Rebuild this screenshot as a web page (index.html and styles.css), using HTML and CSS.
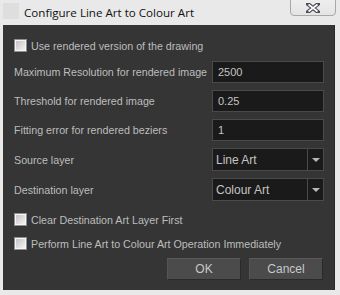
FILE: index.html
```html
<!DOCTYPE html>
<html>
<head>
  <title>Configure Line Art to Colour Art</title>
  <link rel="stylesheet" href="styles.css">
</head>
<body>

<div class="window">
  <div class="titlebar">
    <span class="app-icon"></span>
    <span class="title">Configure Line Art to Colour Art</span>
    <button type="button" class="close">
      <svg width="14" height="10" viewBox="0 0 14 10">
        <path d="M2 1 L12 9 M12 1 L2 9" stroke="#4a4a5a" stroke-width="4" stroke-linecap="square"/>
        <path d="M2.5 1.5 L11.5 8.5 M11.5 1.5 L2.5 8.5" stroke="#ffffff" stroke-width="1.6"/>
      </svg>
    </button>
  </div>

  <div class="content">
    <label class="check first"><span class="box"></span>Use rendered version of the drawing</label>

    <div class="form">
      <span class="lbl">Maximum Resolution for rendered image</span>
      <span class="field">2500</span>

      <span class="lbl">Threshold for rendered image</span>
      <span class="field">0.25</span>

      <span class="lbl">Fitting error for rendered beziers</span>
      <span class="field">1</span>

      <span class="lbl">Source layer</span>
      <span class="combo"><span class="value">Line Art</span><span class="arrow"></span></span>

      <span class="lbl">Destination layer</span>
      <span class="combo"><span class="value">Colour Art</span><span class="arrow"></span></span>
    </div>

    <label class="check clear"><span class="box"></span>Clear Destination Art Layer First</label>
    <label class="check perform"><span class="box"></span>Perform Line Art to Colour Art Operation Immediately</label>

    <div class="buttons">
      <button type="button" class="btn">OK</button>
      <button type="button" class="btn">Cancel</button>
    </div>
  </div>
</div>

</body>
</html>
```

FILE: styles.css
```css
body {
  margin: 0;
  background: #e9e9e9;
  font-family: "Liberation Sans", Arial, sans-serif;
}

.window {
  width: 340px;
  height: 295px;
  display: flex;
  flex-direction: column;
}

.titlebar {
  height: 25px;
  display: flex;
  align-items: flex-start;
  position: relative;
}

.app-icon {
  width: 16px;
  height: 16px;
  margin: 3px 0 0 3px;
  background: #dedede;
}

.title {
  margin: 5px 0 0 5px;
  font-family: "Open Sans", sans-serif;
  font-size: 11.6px;
  color: #111;
}

.close {
  position: absolute;
  left: 290px;
  top: -1px;
  width: 46px;
  height: 17px;
  padding: 0;
  border: 1px solid #a8a8a8;
  border-radius: 0 0 4px 4px;
  background: linear-gradient(#eeeeee, #e4e4e4);
  display: flex;
  align-items: center;
  justify-content: center;
}

.content {
  flex: 1;
  margin: 0 5px 5px 3px;
  background: #353535;
  border-right: 1px solid #2a2a2a;
  padding: 14px 10px 0 11px;
  color: #bdbdbd;
  font-size: 10.7px;
  white-space: nowrap;
}

.check {
  display: flex;
  align-items: center;
  height: 13px;
}

.box {
  width: 11px;
  height: 11px;
  margin-right: 4px;
  border: 1px solid #8e8e8e;
  box-shadow: inset 0 0 0 1px #f6f6f6;
  background: linear-gradient(135deg, #bdbdbd, #f8f8f8);
}

.form {
  margin-top: 9px;
  display: grid;
  grid-template-columns: 1fr 112px;
  grid-template-rows: 22px 22px 22px 23px 23px;
  row-gap: 7px;
  align-items: center;
}

.field,
.combo {
  box-sizing: border-box;
  height: 100%;
  background: #1a1a1a;
  border: 1px solid #4a4a4a;
  color: #c4c4c4;
  display: flex;
  align-items: center;
}

.field {
  padding-left: 5px;
  font-size: 11px;
}

.combo .value {
  flex: 1;
  padding-left: 3px;
  font-size: 12px;
}

.arrow {
  width: 16px;
  height: 100%;
  box-sizing: border-box;
  border-left: 1px solid #4a4a4a;
  display: flex;
  align-items: center;
  justify-content: center;
}

.arrow::after {
  content: "";
  border-left: 4px solid transparent;
  border-right: 4px solid transparent;
  border-top: 4px solid #b8b8b8;
}

.clear {
  margin-top: 12px;
}

.perform {
  margin-top: 11px;
}

.buttons {
  margin-top: 8px;
  padding-right: 1px;
  display: flex;
  justify-content: flex-end;
  gap: 8px;
}

.btn {
  width: 74px;
  height: 22px;
  background: #4b4b4b;
  border: 1px solid #2a2a2a;
  border-top-color: #5a5a5a;
  border-left-color: #555;
  color: #c8c8c8;
  font-family: "Liberation Sans", Arial, sans-serif;
  font-size: 12px;
  padding: 0;
}
```
